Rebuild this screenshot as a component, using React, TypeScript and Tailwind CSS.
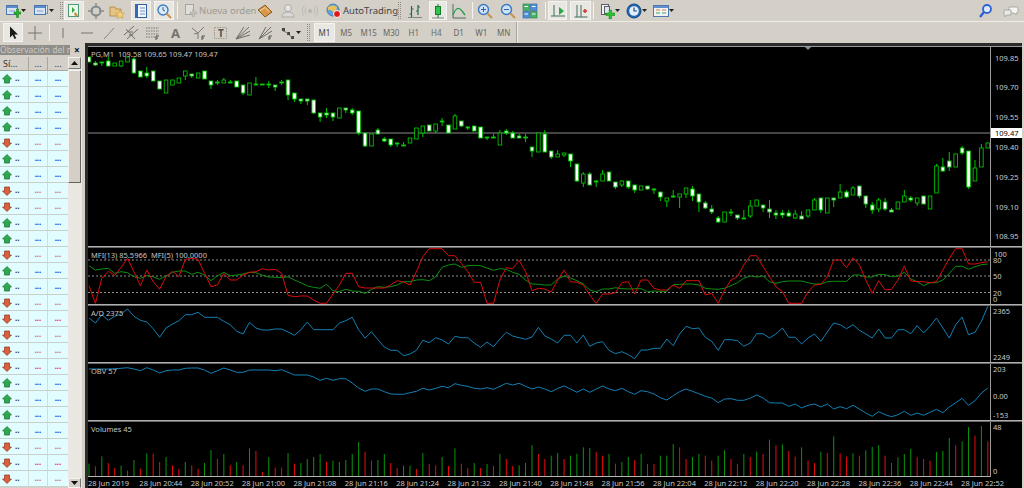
import type { ReactNode } from "react";

const font = { fontFamily: '"Noto Sans", "Liberation Sans", sans-serif' };

// candles: bodyTop, bodyBottom, wickTop, wickBottom, white(1)/hollow(0), in page px
const candles = `57 62 57 62 1,63 65 61 66 1,62 63 62 66 1,61 66 57 66 1,63 66 63 66 0,61 66 61 67 0,57 62 57 62 0,59 73 57 73 1,71 77 71 77 1,73 76 67 78 1,71 81 71 81 1,81 89 81 89 1,80 93 80 93 0,80 85 80 85 0,78 83 78 83 0,71 76 71 80 0,74 76 74 78 1,73 78 73 78 0,71 79 71 79 1,81 85 81 89 1,82 83 80 85 1,80 83 78 83 0,82 83 80 83 1,81 87 81 87 1,85 93 85 95 1,83 95 83 95 0,84 85 77 85 1,84 85 84 85 1,84 85 81 88 1,85 87 85 91 1,82 83 80 85 1,80 95 80 100 1,93 99 93 102 1,99 101 99 104 1,99 101 99 105 1,100 113 100 114 1,113 117 113 122 1,113 115 108 118 1,113 117 113 121 1,108 118 108 118 0,108 110 108 113 1,110 113 108 115 1,111 133 111 135 1,133 146 133 147 1,134 146 134 146 0,130 134 128 134 1,139 141 137 142 1,139 145 139 147 1,143 144 142 147 1,145 146 142 146 1,138 143 138 143 0,128 139 128 139 0,126 133 126 137 0,125 131 125 131 1,124 131 124 133 0,121 122 118 126 1,125 133 125 133 1,116 129 114 129 0,121 126 121 127 1,127 128 126 130 1,126 131 126 131 1,127 138 127 138 1,137 138 137 140 1,137 138 134 138 1,133 145 130 145 0,131 133 129 135 1,133 138 131 138 1,136 138 134 138 1,137 138 134 142 1,147 151 147 157 1,133 152 133 152 0,134 152 130 152 1,151 157 151 159 1,154 157 150 157 0,153 155 153 157 0,154 161 154 167 1,164 181 164 182 1,174 183 172 187 0,174 185 172 185 1,181 182 180 187 1,174 181 170 181 0,172 181 172 181 1,182 187 182 189 1,181 185 180 187 0,181 187 181 189 1,185 190 185 193 1,186 190 186 190 0,186 189 186 190 1,189 190 188 194 1,192 197 192 201 1,198 201 198 207 0,196 197 190 198 1,194 197 194 208 0,188 194 188 198 0,189 196 186 201 1,194 202 194 212 1,203 208 201 209 1,209 212 205 214 1,218 222 216 223 1,212 222 212 222 0,212 213 209 216 1,215 218 215 220 1,218 219 210 219 1,206 216 200 218 0,200 206 200 206 0,205 208 205 212 1,209 212 200 218 1,213 215 210 219 1,213 215 210 218 1,213 216 210 217 1,214 218 210 219 0,216 219 211 219 1,210 216 210 218 0,200 210 198 210 0,198 210 198 213 1,198 213 198 213 0,198 200 198 207 1,192 198 184 198 0,192 197 190 198 1,188 195 186 195 0,186 196 186 198 1,196 204 196 208 1,205 210 202 214 1,200 209 198 212 0,202 209 198 211 1,210 212 208 212 1,202 209 202 209 0,196 202 190 202 0,198 200 196 202 1,198 203 198 206 0,196 204 196 204 1,196 209 196 209 0,166 193 164 193 0,167 171 158 172 1,161 167 152 171 1,154 167 154 167 0,148 153 146 155 1,151 187 151 189 1,168 181 160 181 0,148 167 144 167 0,143 148 143 148 0`
  .split(",")
  .map((c) => c.split(" ").map(Number));

// indicator samples, read off the 3x crops: page y = top + v / 3
const mfiRed = `467 520 445 424 436 412 385 425 467 420 455 478 440 424 440 388 385 388 430 470 465 430 450 450 435 427 425 416 420 418 430 496 500 498 498 510 520 520 492 465 430 430 470 474 474 474 474 465 452 456 465 425 380 356 356 356 377 377 400 425 457 457 520 520 450 413 416 391 425 482 475 477 486 450 420 455 457 465 495 520 492 492 488 458 455 492 450 450 475 480 480 466 475 452 452 452 495 490 520 480 450 440 405 377 377 410 440 470 485 520 520 520 485 465 463 440 390 390 413 383 405 450 490 452 480 478 450 408 453 455 455 458 455 420 385 356 356 402 402 398 395`;
const mfiGreen = `407 420 417 415 430 425 428 440 445 437 440 448 438 427 423 423 433 427 435 452 437 427 437 435 432 427 428 436 441 442 443 440 450 458 468 472 475 463 482 485 478 483 484 490 478 470 472 470 465 455 455 450 449 452 440 412 405 402 412 407 406 407 414 421 416 418 427 433 450 462 463 465 465 447 438 444 452 462 480 485 477 477 473 476 477 476 476 485 483 484 484 464 463 462 462 465 475 477 478 475 467 458 445 438 441 438 455 460 455 453 453 453 458 462 462 455 454 454 454 435 435 441 441 433 434 440 438 427 447 455 467 458 458 450 430 409 409 418 410 404 402`;
const adLine = `30 45 20 37 25 18 3 25 37 42 62 88 60 48 38 20 20 13 28 28 28 40 50 70 78 43 60 66 66 63 63 72 82 65 42 65 65 65 65 45 38 28 65 90 71 95 117 127 127 143 138 127 97 104 89 96 108 85 89 89 105 118 102 116 93 73 84 89 94 87 58 84 93 105 82 82 105 81 115 105 101 127 137 131 140 152 126 126 121 121 93 113 78 55 62 60 88 100 127 95 95 98 115 105 77 77 90 78 60 88 88 108 90 78 100 72 45 50 62 50 67 78 90 63 90 90 65 65 77 53 75 55 30 60 90 50 27 80 73 40 -5`;
const obvLine = `183 183 183 183 182 181 179 183 188 179 186 195 188 186 186 181 180 180 186 196 188 180 186 193 193 186 186 186 186 188 185 193 201 201 201 207 217 211 217 212 212 225 240 250 243 243 251 258 259 259 254 250 241 246 241 235 239 227 232 235 241 243 239 244 235 226 231 226 235 243 237 243 251 241 234 243 253 243 253 243 234 243 248 241 251 259 248 251 258 269 276 263 251 243 250 257 265 270 284 273 272 277 277 270 261 270 284 285 285 295 288 300 292 288 297 288 303 296 302 292 303 315 325 311 320 326 320 310 322 315 322 313 304 314 297 284 271 292 278 255 240`;
const volumes = `g467 r475 g445 r465 r480 g473 r488 g456 r482 g436 r437 r462 g447 r472 r483 g462 r472 r482 g465 g426 r452 g438 r472 g462 r472 g421 r429 r492 g447 r479 r479 g435 r467 g465 g453 g447 g438 r461 g458 g462 g456 g438 g402 r431 r458 g456 g438 r465 r480 g473 g473 r483 g435 r468 r472 g447 r474 g421 r467 r480 g465 r480 g468 r474 g438 r453 r474 g472 g465 g412 r438 r453 g443 g435 r453 g443 g437 g418 g420 r432 r443 g438 r467 g462 g447 r456 g438 r468 r468 g443 g443 g408 r418 r453 g447 g438 r443 r458 g443 g427 r453 r468 g438 r447 g431 r438 g395 r412 g409 r429 r446 g418 r458 r465 g431 r435 g385 r436 r446 g436 r443 g427 g417 g412 r443 r465 g448 g438 g422 r448 r453 r458 g432 g429 g390 r412 g400 g357 r383 g354 r400`;

const cx = (i: number) => 89 + 6.42 * i;
const linePoints = (data: string, top: number) =>
  data
    .split(" ")
    .map((v, i) => `${cx(i).toFixed(1)},${(top + Number(v) / 3).toFixed(1)}`)
    .join(" ");

const rows = "ggggrggrrggrggrrrrrggggrrr".split("");
const times = ["28 Jun 2019", ...["20:44", "20:52", "21:00", "21:08", "21:16", "21:24", "21:32", "21:40", "21:48", "21:56", "22:04", "22:12", "22:20", "22:28", "22:36", "22:44", "22:52"].map((t) => `28 Jun ${t}`)];

function Icon({ children, className = "" }: { children: ReactNode; className?: string }) {
  return (
    <svg viewBox="0 0 16 16" className={`w-[16px] h-[16px] shrink-0 ${className}`}>
      {children}
    </svg>
  );
}

const Caret = () => (
  <svg viewBox="0 0 5 3" className="w-[5px] h-[3px] shrink-0">
    <path d="M0 0h5L2.5 3z" fill="#222" />
  </svg>
);

function Pressed({ className, children }: { className: string; children: ReactNode }) {
  return (
    <div className={`h-[19px] flex items-center justify-center bg-[#e9e7e1] border border-[#f4f3ef] shrink-0 ${className}`}>
      {children}
    </div>
  );
}

const Sep = ({ className }: { className: string }) => <div className={`h-[17px] w-[1px] bg-[#9c9a94] border-r border-[#f4f3ef] shrink-0 ${className}`} />;
const Grip = ({ className }: { className: string }) => (
  <div className={`h-[17px] w-[3px] shrink-0 border-x border-dotted border-[#8e8c86] ${className}`} />
);

const WindowGlyph = () => (
  <>
    <rect x="1.5" y="2.5" width="11" height="9" fill="#d8e4f4" stroke="#4b76ad" />
    <rect x="2" y="3" width="10" height="2" fill="#5c8ccc" />
    <path d="M4 8h6" stroke="#7e9cc4" />
  </>
);
const GreenPlus = () => <path d="M9 9h2.500v-3h2v3H16v2h-2.500v3.500h-2V11H9z" fill="#27b52b" stroke="#0d7a12" strokeWidth=".5" />;

function TopBar() {
  return (
    <div className="h-[22px] flex items-center border-b border-[#eeece6] shrink-0 text-[#333]">
      <Icon className="ml-[5px]">
        <WindowGlyph />
        <GreenPlus />
      </Icon>
      <Caret />
      <Icon className="ml-[7px]">
        <rect x="4.500" y="2.500" width="10" height="8" fill="#dbe6f3" stroke="#6f8fb8" />
        <WindowGlyph />
      </Icon>
      <Caret />
      <Grip className="ml-[6px]" />
      <Pressed className="w-[20px] ml-[1px]">
        <Icon>
          <rect x="2.500" y="1.500" width="10" height="12" fill="#eef6e6" stroke="#4f9a7c" />
          <path d="M6 4l3 3-3 3z" fill="#2fa84f" />
          <path d="M9 9l3 3-2 2-2-3z" fill="#d08a3c" />
        </Icon>
      </Pressed>
      <Icon className="ml-[4px]">
        <circle cx="8" cy="8" r="4.500" fill="none" stroke="#7f8c92" strokeWidth="2" />
        <path d="M8 0v5M8 11v5M0 8h5M11 8h5" stroke="#8d8b84" strokeWidth="1.500" />
      </Icon>
      <Icon className="ml-[5px]">
        <path d="M1 4h5l1 2h5v7H1z" fill="#e6c486" stroke="#b88f4c" />
        <path d="M11 7l1.500 3 3 .4-2.200 2 .6 3-2.900-1.500-2.900 1.500.6-3-2.200-2 3-.4z" fill="#f0cf7a" stroke="#c59b3c" strokeWidth=".6" />
      </Icon>
      <Pressed className="w-[20px] ml-[6px]">
        <Icon>
          <rect x="2.500" y="1.500" width="11" height="13" fill="#f2f6fb" stroke="#315fa4" />
          <rect x="2" y="1" width="3" height="14" fill="#2f6bb9" />
          <path d="M7 5h5M7 8h5M7 11h5" stroke="#6a8fc0" />
        </Icon>
      </Pressed>
      <Pressed className="w-[20px] ml-[3px]">
        <Icon>
          <circle cx="7" cy="7" r="5" fill="#dcebf8" stroke="#3f7dc0" strokeWidth="1.400" />
          <path d="M7 4v3l2 1" stroke="#2a5f9c" fill="none" />
          <path d="M10.500 10.500L15 15" stroke="#c99250" strokeWidth="2" />
        </Icon>
      </Pressed>
      <Sep className="ml-[3px]" />
      <Icon className="ml-[4px] opacity-60">
        <rect x="3.500" y="1.500" width="8" height="10" fill="#e8e8e8" stroke="#8a8a8a" />
        <path d="M8 9h2.500V6.500h2V9H15v2h-2.500v2.500h-2V11H8z" fill="#b6b6b0" stroke="#8a8a8a" strokeWidth=".5" />
      </Icon>
      <div className="ml-[1px] w-[52px] text-[9.5px] leading-none text-[#9a9993] whitespace-nowrap" style={font}>Nueva orden</div>
      <Icon className="ml-[6px]">
        <path d="M1 7l7-5 7 7-7 5z" fill="#d9974a" stroke="#8a5a23" />
        <path d="M3 8l5-3.500 4 4" fill="none" stroke="#f3d9a7" />
      </Icon>
      <Icon className="ml-[7px] opacity-70">
        <circle cx="8" cy="5" r="3.500" fill="#ececec" stroke="#9b9b9b" />
        <path d="M2 14c0-4 3-5 6-5s6 1 6 5z" fill="#dcdcdc" stroke="#9b9b9b" />
      </Icon>
      <Icon className="ml-[6px] opacity-70">
        <circle cx="8" cy="8" r="2" fill="#aaa" />
        <path d="M4.500 4.500a5 5 0 000 7M11.500 4.500a5 5 0 010 7M2.500 2.500a8 8 0 000 11M13.500 2.500a8 8 0 010 11" fill="none" stroke="#b1b1ac" />
      </Icon>
      <Icon className="ml-[7px]">
        <circle cx="8" cy="7" r="6" fill="#5fa3dc" stroke="#4a7ba8" />
        <path d="M3 4c3-2 6-2 9 0l-1 4-3 1-2-2H3z" fill="#e8c15a" />
        <circle cx="12" cy="11" r="3.500" fill="#e01818" stroke="#fff" />
      </Icon>
      <div className="ml-[2px] w-[48px] text-[9.5px] leading-none text-[#444] whitespace-nowrap" style={font}>AutoTrading</div>
      <Grip className="ml-[7px]" />
      <Icon className="ml-[6px]">
        <path d="M4.500 3v11M2.500 11h2M4.500 6h2M11 2v10M9 8h2M11 4h2" stroke="#1f6b55" strokeWidth="1.200" fill="none" />
        <path d="M1 14.500h14" stroke="#7a8a80" />
      </Icon>
      <Pressed className="w-[18px] ml-[6px]">
        <Icon>
          <path d="M8 1v14" stroke="#1f6b55" />
          <rect x="5.500" y="3.500" width="5" height="8" fill="#33c24a" stroke="#127a2a" />
          <path d="M2 15h12" stroke="#7a8a80" />
        </Icon>
      </Pressed>
      <Icon className="ml-[4px]">
        <path d="M2 1v14h13" fill="none" stroke="#4f6c60" />
        <path d="M2 12c3-8 6-8 9-4l3 4" fill="none" stroke="#269a4d" strokeWidth="1.300" />
      </Icon>
      <Sep className="ml-[5px]" />
      <Icon className="ml-[4px]">
        <circle cx="6.500" cy="6.500" r="5" fill="#cfe2f6" stroke="#3b78c2" strokeWidth="1.400" />
        <path d="M4 6.500h5M6.500 4v5" stroke="#2f63a8" />
        <path d="M10.500 10.500L15 15" stroke="#c99250" strokeWidth="2" />
      </Icon>
      <Icon className="ml-[7px]">
        <circle cx="6.500" cy="6.500" r="5" fill="#cfe2f6" stroke="#3b78c2" strokeWidth="1.400" />
        <path d="M4 6.500h5" stroke="#2f63a8" />
        <path d="M10.500 10.500L15 15" stroke="#c99250" strokeWidth="2" />
      </Icon>
      <Icon className="ml-[6px]">
        <rect x="1" y="1" width="6.500" height="6.500" fill="#46b36a" stroke="#23784a" strokeWidth=".6" />
        <rect x="8.500" y="1" width="6.500" height="6.500" fill="#4f8fd6" stroke="#2c5f9e" strokeWidth=".6" />
        <rect x="1" y="8.500" width="6.500" height="6.500" fill="#4f8fd6" stroke="#2c5f9e" strokeWidth=".6" />
        <rect x="8.500" y="8.500" width="6.500" height="6.500" fill="#46b36a" stroke="#23784a" strokeWidth=".6" />
        <path d="M2.500 3.500h3.500M10 3.500h3.500M2.500 11h3.500M10 11h3.500" stroke="#fff" />
      </Icon>
      <Sep className="ml-[7px]" />
      <Pressed className="w-[19px] ml-[2px]">
        <Icon>
          <path d="M4 2v11M1 13h14" stroke="#3f6f62" />
          <path d="M9 4l5 4-5 4z" fill="#2aa845" />
        </Icon>
      </Pressed>
      <Pressed className="w-[21px] ml-[3px]">
        <Icon>
          <path d="M4 2v12M8 2v12M1.500 14h13" stroke="#3f6f62" />
          <path d="M10 8h4M12 6v4" stroke="#d83030" strokeWidth="1.500" />
        </Icon>
      </Pressed>
      <Sep className="ml-[2px]" />
      <Icon className="ml-[5px]">
        <rect x="2.500" y="1.500" width="7" height="10" fill="#f2f2ee" stroke="#57606a" />
        <rect x="5.500" y="3.500" width="5" height="7" fill="#dfe6ee" stroke="#57606a" />
        <path d="M7 10h3V7h2.500v3H16v2.500h-3.500V16H10v-3.500H7z" fill="#2cc22f" stroke="#0f7c14" strokeWidth=".5" />
      </Icon>
      <Caret />
      <Icon className="ml-[6px]">
        <circle cx="8" cy="8" r="7" fill="#1f66b4" stroke="#16467d" />
        <circle cx="8" cy="8" r="4.800" fill="#e7f0fa" />
        <path d="M8 4.500V8h3" stroke="#194e8c" strokeWidth="1.200" fill="none" />
      </Icon>
      <Caret />
      <Icon className="ml-[6px]">
        <rect x=".5" y="2.500" width="15" height="11" fill="#f0f2f4" stroke="#4f78ad" />
        <rect x="1" y="3" width="14" height="2" fill="#5e90cf" />
        <path d="M3 7h4M9 7h4" stroke="#d6803c" strokeWidth="1.200" />
        <path d="M3 10h4M9 10h4" stroke="#46a36b" strokeWidth="1.200" />
      </Icon>
      <Caret />
      <div className="flex-1" />
      <Icon>
        <circle cx="10" cy="6" r="4" fill="#dce8fb" stroke="#2c62d6" strokeWidth="1.800" />
        <path d="M7 9L3 14" stroke="#2c62d6" strokeWidth="2.400" />
      </Icon>
      <Icon className="ml-[10px] mr-[5px]">
        <path d="M6 4h9v6h-2v2l-2-2H6z" fill="#f4f4f2" stroke="#a9a9a6" />
        <path d="M1 7h7v5H4l-2 2v-2H1z" fill="#eaeae8" stroke="#a9a9a6" />
      </Icon>
    </div>
  );
}

const periods = ["M5", "M15", "M30", "H1", "H4", "D1", "W1", "MN"];

function DrawBar() {
  return (
    <div className="h-[21px] flex items-center shrink-0">
      <Pressed className="w-[20px] ml-[3px]">
        <Icon>
          <path d="M5 1.500v11l2.700-2.400 1.800 4 1.700-.8-1.800-3.900h3.600z" fill="#1a1a1a" />
        </Icon>
      </Pressed>
      <Icon className="ml-[4px]">
        <path d="M8 1v14M1 8h14" stroke="#77756f" />
      </Icon>
      <Sep className="ml-[6px]" />
      <Icon className="ml-[5px]"><path d="M8 3v10" stroke="#77756f" /></Icon>
      <Icon className="ml-[8px]"><path d="M2 8h12" stroke="#77756f" /></Icon>
      <Icon className="ml-[6px]"><path d="M3 14L13 3" stroke="#8a8882" /></Icon>
      <Icon className="ml-[6px]">
        <path d="M1 10L11 1M4 14L15 4M3 4l9 10M6 7h4M6 10h4" stroke="#6f6d68" fill="none" />
      </Icon>
      <Icon className="ml-[6px]">
        <path d="M1 3h13M1 6h13M1 9h13M1 12h9" stroke="#77756f" strokeDasharray="1.500 1" />
        <path d="M11 11h3M11 11v4M11 13h2" stroke="#55534f" />
      </Icon>
      <Icon className="ml-[7px]">
        <text x="3" y="13" fontSize="13" fontWeight="700" fill="#74726d" style={font}>A</text>
      </Icon>
      <Icon className="ml-[7px]">
        <path d="M1 3l6 5 6-6M7 8v6M3 9l4-1" stroke="#7c7a75" fill="none" />
        <path d="M11 11h3M11 11v4M11 13h2" stroke="#55534f" />
      </Icon>
      <Icon className="ml-[6px]">
        <rect x="1.500" y="2.500" width="12" height="11" fill="none" stroke="#9a9892" strokeDasharray="1.500 1" />
        <text x="5" y="12" fontSize="10" fontWeight="700" fill="#55534f" style={font}>T</text>
      </Icon>
      <Icon className="ml-[6px]">
        <path d="M1 14L14 2M1 14L15 6M1 14L15 10M1 14L9 2" stroke="#6f6d68" fill="none" />
      </Icon>
      <Icon className="ml-[7px]">
        <path d="M1 14L13 2M1 14L14 6M1 14L8 2" stroke="#6f6d68" fill="none" />
        <path d="M11 11h3M11 11v4M11 13h2" stroke="#55534f" />
      </Icon>
      <Icon className="ml-[6px]">
        <path d="M2 3h3v3H2zM7 7h3v3H7zM11 11h3v3h-3z" fill="#444" />
        <path d="M3 6l5 2M9 10l3 2" stroke="#777" />
      </Icon>
      <Caret />
      <Grip className="ml-[6px]" />
      <Pressed className="w-[21px] ml-[4px] text-[8px] leading-none text-[#444]">
        <span style={font}>M1</span>
      </Pressed>
      {periods.map((p) => (
        <div key={p} className="w-[22.500px] text-center text-[8px] leading-none text-[#686761] shrink-0" style={font}>
          {p}
        </div>
      ))}
      <div className="w-[2px] h-[21px] ml-[1px] border-l border-[#a5a39d] bg-[#eeece6]" />
    </div>
  );
}

function RowArrow({ up }: { up: boolean }) {
  return (
    <svg viewBox="0 0 10 10" className="w-[10px] h-[10px] ml-[2px] shrink-0">
      {up ? (
        <path d="M5 .5L9.500 5H7.500v4H2.500V5H.5z" fill="#2bab4a" stroke="#14682a" strokeWidth=".7" />
      ) : (
        <path d="M5 9.500L9.500 5H7.500V1H2.500V5H.5z" fill="#d8603a" stroke="#8c3320" strokeWidth=".7" />
      )}
    </svg>
  );
}

function Sidebar() {
  return (
    <div className="w-[82px] shrink-0 flex flex-col pt-[2px] overflow-hidden" style={font}>
      <div className="h-[10px] flex items-center shrink-0">
        <div className="w-[70px] h-[10px] bg-[#8f8d88] text-[#c9c8c4] text-[8.5px] leading-[10px] whitespace-nowrap">Observación del m</div>
        <div className="ml-[4px] text-[#111] text-[10px] leading-none font-bold">×</div>
      </div>
      <div className="flex flex-1 min-h-0 mt-[2px]">
        <div className="w-[68px] shrink-0">
          <div className="h-[14px] flex text-[9px] leading-[13px] text-[#333] border-b border-[#a8a69f]">
            <div className="w-[29px] pl-[3px] border-r border-[#a8a69f]">Sí...</div>
            <div className="w-[19px] text-center border-r border-[#a8a69f]">...</div>
            <div className="w-[20px] text-center">...</div>
          </div>
          {rows.map((r, i) => {
            const up = r === "g";
            const c = up ? "text-[#2433d6]" : i % 3 === 0 ? "text-[#e2381e]" : "text-[#d9701e]";
            return (
              <div key={i} className="h-[16px] flex items-center border-b border-[#c9cfcf] bg-[#e2fdff] text-[8px] leading-[8px]">
                <div className="w-[29px] h-full flex items-center border-r border-[#d3dcdc]">
                  <RowArrow up={up} />
                  <span className="ml-[3px] text-[#333] font-bold pb-[2px]">..</span>
                </div>
                <div className={`w-[19px] h-full flex items-center justify-center border-r border-[#d3dcdc] font-bold pb-[2px] ${c}`}>...</div>
                <div className={`w-[20px] h-full flex items-center justify-center font-bold pb-[2px] ${c}`}>...</div>
              </div>
            );
          })}
        </div>
        <div className="w-[14px] flex flex-col bg-[#e9e7e1] pr-[1px]">
          <div className="h-[12px] bg-[#d4d0c8] border border-[#f4f3ef] border-b-[#77756f] border-r-[#77756f] flex items-center justify-center shrink-0">
            <svg viewBox="0 0 7 4" className="w-[7px] h-[4px]"><path d="M3.500 0L7 4H0z" fill="#111" /></svg>
          </div>
          <div className="h-[113px] mt-[1px] bg-[#d4d0c8] border border-[#f4f3ef] border-b-[#66645e] border-r-[#66645e] shrink-0" />
          <div className="flex-1" />
          <div className="h-[10px] bg-[#d4d0c8] border border-[#f4f3ef] border-r-[#77756f] flex items-center justify-center shrink-0">
            <svg viewBox="0 0 7 4" className="w-[7px] h-[4px]"><path d="M0 0h7L3.500 4z" fill="#111" /></svg>
          </div>
        </div>
      </div>
    </div>
  );
}

function AxisLabel({ y, x = 4, children }: { y: number; x?: number; children: ReactNode }) {
  return (
    <div className="absolute text-[7.5px] leading-[10px] text-[#c8c8c8] whitespace-nowrap" style={{ top: y - 5, left: x }}>
      {children}
    </div>
  );
}

function Panel({ top, height, title, axis, children }: { top: number; height: number; title?: string; axis: ReactNode; children: ReactNode }) {
  return (
    <div className="flex shrink-0" style={{ height }}>
      <div className="relative w-[902px] shrink-0">
        <svg viewBox={`88 ${top} 902 ${height}`} className="w-[902px] block" style={{ height }}>
          {children}
        </svg>
        {title && <div className="absolute left-[3px] top-[2px] text-[7.5px] leading-[10px] text-[#c4c4c4] whitespace-pre">{title}</div>}
      </div>
      <div className="relative flex-1 border-l border-[#9a9a9a]">{axis}</div>
    </div>
  );
}

const Divider = () => <div className="h-[2px] bg-[#b0b0b0] shrink-0 border-b border-[#666]" />;

function Chart() {
  return (
    <div className="flex-1 min-w-0 ml-[3px] mr-[2px] bg-black border-l-[3px] border-[#2b2b2b] flex flex-col overflow-hidden" style={font}>
      <div className="h-[3px] bg-[#2b2b2b] shrink-0" />
      <div className="h-[1px] bg-[#9a9a9a] shrink-0" />
      <Panel
        top={47}
        height={199}
        title="PG,M1  109.58 109.65 109.47 109.47"
        axis={
          <>
            <AxisLabel y={11}>109.85</AxisLabel>
            <AxisLabel y={40}>109.70</AxisLabel>
            <AxisLabel y={70}>109.55</AxisLabel>
            <AxisLabel y={100}>109.40</AxisLabel>
            <AxisLabel y={130}>109.25</AxisLabel>
            <AxisLabel y={160}>109.10</AxisLabel>
            <AxisLabel y={189}>108.95</AxisLabel>
            <div className="absolute left-0 right-0 top-[81px] h-[10px] bg-white text-black text-[7.5px] leading-[10px] pl-[4px]">109.47</div>
          </>
        }
      >
        <line x1="88" x2="990" y1="133" y2="133" stroke="#8c8c8c" />
        <path d="M805 47h6l-3 3z" fill="#7f8c99" />
        {candles.map(([t, b, wt, wb, white], i) => (
          <g key={i}>
            <line x1={cx(i)} x2={cx(i)} y1={wt} y2={wb} stroke="#00c800" />
            <rect x={cx(i) - 1.8} y={t} width={3.6} height={Math.max(b - t, 1)} fill={white ? "#fff" : "#000"} stroke="#00c000" strokeWidth="0.9" />
          </g>
        ))}
      </Panel>
      <Divider />
      <Panel
        top={248}
        height={56}
        title="MFI(13) 85.5966  MFI(5) 100.0000"
        axis={
          <>
            <AxisLabel y={6} x={3}>100</AxisLabel>
            <AxisLabel y={12} x={2}>80</AxisLabel>
            <AxisLabel y={28} x={2}>50</AxisLabel>
            <AxisLabel y={45} x={2}>20</AxisLabel>
            <AxisLabel y={51} x={2}>0</AxisLabel>
          </>
        }
      >
        {[260, 276, 292.5].map((y) => (
          <line key={y} x1="88" x2="990" y1={y} y2={y} stroke="#8a8a8a" strokeDasharray="2 2" />
        ))}
        <polyline points={linePoints(mfiGreen, 130)} fill="none" stroke="#0f8f10" strokeWidth="1" />
        <polyline points={linePoints(mfiRed, 130)} fill="none" stroke="#dc0c0c" strokeWidth="1" />
      </Panel>
      <Divider />
      <Panel
        top={306}
        height={56}
        title="A/D 2375"
        axis={
          <>
            <AxisLabel y={5} x={2}>2365</AxisLabel>
            <AxisLabel y={51} x={2}>2249</AxisLabel>
          </>
        }
      >
        <polyline points={linePoints(adLine, 308)} fill="none" stroke="#1280b4" strokeWidth="1" />
      </Panel>
      <Divider />
      <Panel
        top={364}
        height={56}
        title="OBV 57"
        axis={
          <>
            <AxisLabel y={5} x={2}>203</AxisLabel>
            <AxisLabel y={32} x={2}>0.00</AxisLabel>
            <AxisLabel y={51} x={2}>-153</AxisLabel>
          </>
        }
      >
        <polyline points={linePoints(obvLine, 308)} fill="none" stroke="#1280b4" strokeWidth="1" />
      </Panel>
      <Divider />
      <Panel
        top={422}
        height={55}
        title="Volumes 45"
        axis={
          <>
            <AxisLabel y={5} x={2}>48</AxisLabel>
            <AxisLabel y={49} x={2}>0</AxisLabel>
          </>
        }
      >
        {volumes.split(" ").map((v, i) => (
          <line key={i} x1={cx(i)} x2={cx(i)} y1={308 + Number(v.slice(1)) / 3} y2={476} stroke={v[0] === "g" ? "#0a960a" : "#e80c0c"} />
        ))}
        <line x1="88" x2="990" y1="476.500" y2="476.500" stroke="#b4b4b4" />
      </Panel>
      <div className="relative flex-1 min-h-0">
        {times.map((t, i) => (
          <div key={i} className="absolute top-[1px] text-[7.5px] leading-[10px] text-[#c8c8c8] whitespace-nowrap" style={{ left: 51.36 * i }}>
            {t}
          </div>
        ))}
      </div>
    </div>
  );
}

export default function App() {
  return (
    <div className="w-[1024px] h-[488px] bg-[#d4d0c8] flex flex-col overflow-hidden">
      <TopBar />
      <DrawBar />
      <div className="flex flex-1 min-h-0">
        <Sidebar />
        <Chart />
      </div>
    </div>
  );
}
